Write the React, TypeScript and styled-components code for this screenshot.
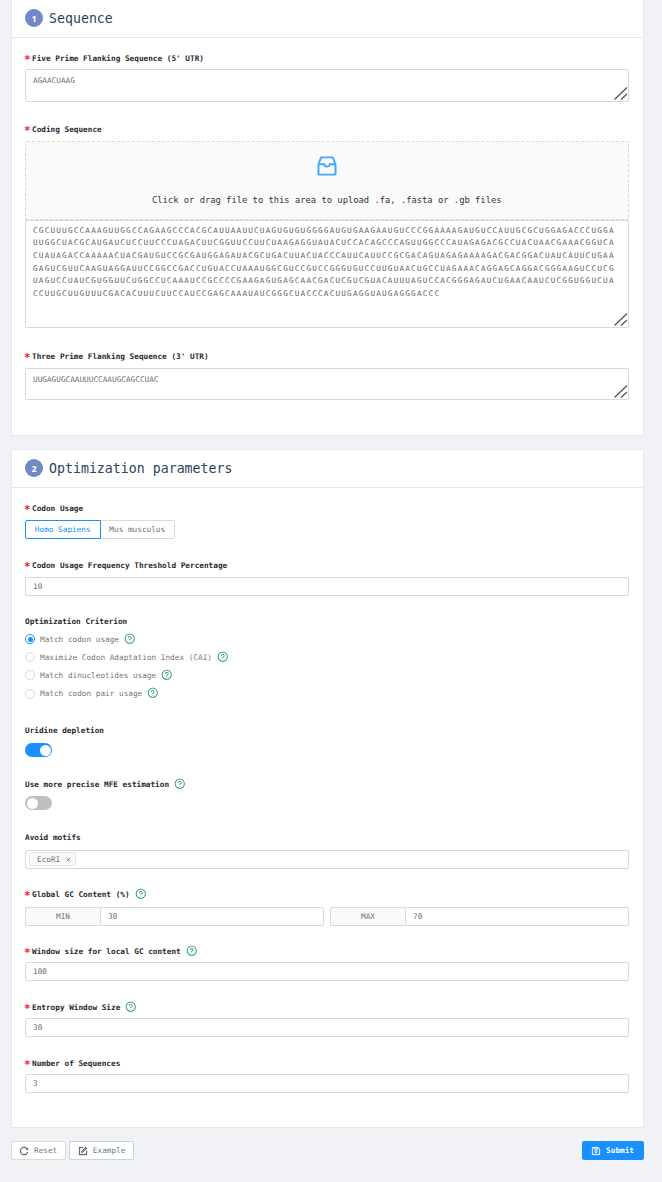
import React from 'react';
import styled, { createGlobalStyle } from 'styled-components';
import {
  AiOutlineClose,
  AiOutlineForm,
  AiOutlineInbox,
  AiOutlineQuestionCircle,
  AiOutlineReload,
  AiOutlineSave,
} from 'react-icons/ai';

const mono = '"DejaVu Sans Mono", monospace';

const GlobalStyle = createGlobalStyle`
  html, body {
    margin: 0;
    height: 1182px;
    overflow: hidden;
    background: #f0f2f5;
    font-family: ${mono};
  }
`;

const Page = styled.div`
  padding: 0 18.5px 0 10.5px;
  display: flex;
  flex-direction: column;
  gap: 13px;
`;

const Card = styled.section<{ $first?: boolean }>`
  background: #fff;
  border: 1px solid #e8e8e8;
  border-top: ${({ $first }) => ($first ? 'none' : '1px solid #e8e8e8')};
`;

const CardHead = styled.header<{ $first?: boolean }>`
  height: 37px;
  box-sizing: border-box;
  padding-bottom: ${({ $first }) => ($first ? '1px' : '0')};
  display: flex;
  align-items: center;
  gap: 6px;
  padding-left: 13.5px;
  box-shadow: 0 1px 0 #e8e8e8;
  margin-bottom: 1px;
`;

const Badge = styled.span`
  width: 18px;
  height: 18px;
  border-radius: 50%;
  background: #7189c8;
  color: #fff;
  font: 700 9px "Open Sans", sans-serif;
  display: flex;
  align-items: center;
  justify-content: center;
`;

const Title = styled.h2`
  margin: 0;
  font-size: 13.25px;
  font-weight: 400;
  color: #2c4356;
`;

const CardBody = styled.div<{ $pb: number }>`
  padding: ${({ $pb }) => `14.3px 14px ${$pb}px 13.5px`};
  display: flex;
  flex-direction: column;
`;

const Field = styled.div<{ $mb?: number }>`
  margin-bottom: ${({ $mb }) => $mb ?? 0}px;
`;

const Label = styled.div<{ $gap?: number }>`
  height: 12px;
  margin-bottom: ${({ $gap }) => $gap ?? 5}px;
  display: flex;
  align-items: center;
  font-size: 7.72px;
  font-weight: 700;
  color: #24292e;
  white-space: pre;
`;

const Star = styled.span`
  color: #f5222d;
  font-size: 11px;
  font-weight: 700;
  line-height: 12px;
  padding-top: 1.5px;
  height: 10.5px;
  width: 7px;
  flex: none;
  text-indent: -1px;
`;

const Help = styled(AiOutlineQuestionCircle)`
  color: #1f8f7d;
  font-size: 11.5px;
  margin-left: 5px;
  margin-bottom: 1px;
  flex: none;
`;

const AreaWrap = styled.div`
  position: relative;
  display: flex;
`;

const Area = styled.textarea<{ $h: number; $seq?: boolean }>`
  width: 100%;
  height: ${({ $h }) => $h}px;
  box-sizing: border-box;
  margin: 0;
  padding: ${({ $seq }) => ($seq ? '3.5px 7px' : '6px 7px')};
  border: 1px solid #d9d9d9;
  border-radius: 2px;
  background: #fff;
  color: ${({ $seq }) => ($seq ? '#5f5f5f' : '#6f6f6f')};
  font-family: ${mono};
  font-size: 7.72px;
  line-height: ${({ $seq }) => ($seq ? '12.67px' : '10px')};
  letter-spacing: ${({ $seq }) => ($seq ? '1.17px' : '0')};
  white-space: pre;
  overflow: hidden;
  resize: none;
  outline: none;
`;

const Grip = styled.svg`
  position: absolute;
  right: 1px;
  bottom: 1px;
  width: 14px;
  height: 14px;
`;

const Dragger = styled.div`
  height: 79px;
  box-sizing: border-box;
  border: 1px dashed #d9d9d9;
  border-radius: 2px 2px 0 0;
  background: #fafafa;
  display: flex;
  flex-direction: column;
  align-items: center;
`;

const InboxIcon = styled(AiOutlineInbox)`
  color: #40a9ff;
  font-size: 26px;
  margin-top: 11px;
`;

const DragText = styled.div`
  margin-top: 16px;
  font-size: 8.8px;
  color: #333;
`;

const Segments = styled.div`
  display: flex;
`;

const Segment = styled.div<{ $active?: boolean }>`
  width: 75.5px;
  height: 19px;
  box-sizing: border-box;
  margin-left: ${({ $active }) => ($active ? '0' : '-1px')};
  border: 1px solid ${({ $active }) => ($active ? '#1890ff' : '#d9d9d9')};
  border-radius: ${({ $active }) => ($active ? '2px 0 0 2px' : '0 2px 2px 0')};
  position: ${({ $active }) => ($active ? 'relative' : 'static')};
  background: #fff;
  color: ${({ $active }) => ($active ? '#1890ff' : '#6f6f6f')};
  font-size: 7.72px;
  display: flex;
  align-items: center;
  justify-content: center;
`;

const TextInput = styled.div`
  flex: 1;
  height: 19px;
  box-sizing: border-box;
  padding: 0 7px;
  border: 1px solid #d9d9d9;
  border-radius: 2px;
  background: #fff;
  color: #6f6f6f;
  font-size: 7.72px;
  display: flex;
  align-items: center;
`;

const RadioList = styled.div`
  margin-top: 6.7px;
  display: flex;
  flex-direction: column;
  gap: 8.1px;
`;

const RadioRow = styled.div`
  height: 10px;
  display: flex;
  align-items: center;
  font-size: 7.72px;
  color: #777;
`;

const RadioDot = styled.span<{ $on?: boolean }>`
  width: 10px;
  height: 10px;
  box-sizing: border-box;
  border-radius: 50%;
  border: 1px solid ${({ $on }) => ($on ? '#1890ff' : '#d9d9d9')};
  background: #fff;
  margin-right: 5px;
  flex: none;
  display: flex;
  align-items: center;
  justify-content: center;
  &::after {
    content: '';
    display: ${({ $on }) => ($on ? 'block' : 'none')};
    width: 5px;
    height: 5px;
    border-radius: 50%;
    background: #1890ff;
  }
`;

const Switch = styled.div<{ $on?: boolean }>`
  width: 27px;
  height: 14px;
  box-sizing: border-box;
  padding: 1.5px;
  border-radius: 7px;
  background: ${({ $on }) => ($on ? '#1890ff' : '#bfbfbf')};
  display: flex;
  justify-content: ${({ $on }) => ($on ? 'flex-end' : 'flex-start')};
  &::after {
    content: '';
    width: 11px;
    height: 11px;
    border-radius: 50%;
    background: #fff;
  }
`;

const TagInput = styled.div`
  height: 19.4px;
  box-sizing: border-box;
  padding: 2px 3px;
  border: 1px solid #d9d9d9;
  border-radius: 2px;
  background: #fff;
  display: flex;
  align-items: center;
`;

const Tag = styled.span`
  height: 13.5px;
  box-sizing: border-box;
  padding: 0 3px 0 7px;
  border: 1px solid #e8e8e8;
  border-radius: 2px;
  background: #fafafa;
  color: #6f6f6f;
  font-size: 7.72px;
  white-space: pre;
  display: flex;
  align-items: center;
  svg {
    font-size: 7px;
    color: #777;
  }
`;

const Pair = styled.div`
  display: flex;
  gap: 6.5px;
`;

const Group = styled.div`
  flex: 1;
  display: flex;
  height: 19px;
`;

const Addon = styled.div`
  width: 75px;
  box-sizing: border-box;
  border: 1px solid #d9d9d9;
  border-right: none;
  border-radius: 2px 0 0 2px;
  background: #fafafa;
  color: #6f6f6f;
  font-size: 7.72px;
  display: flex;
  align-items: center;
  justify-content: center;
`;

const Actions = styled.div`
  display: flex;
  align-items: center;
`;

const Button = styled.button<{ $primary?: boolean; $tint?: boolean }>`
  height: 18.5px;
  box-sizing: border-box;
  margin: 0;
  padding: 0 ${({ $primary }) => ($primary ? '8.5px' : '7.5px')};
  border: 1px solid ${({ $primary, $tint }) => ($primary ? '#1890ff' : $tint ? '#c5d5e3' : '#d9d9d9')};
  border-radius: 2px;
  background: ${({ $primary }) => ($primary ? '#1890ff' : '#fff')};
  color: ${({ $primary }) => ($primary ? '#fff' : '#6f7b85')};
  font-family: ${mono};
  font-size: 7.72px;
  font-weight: ${({ $primary }) => ($primary ? 700 : 400)};
  display: flex;
  align-items: center;
  gap: 5px;
  svg {
    font-size: 10px;
    color: ${({ $primary }) => ($primary ? '#fff' : '#444')};
    stroke: currentColor;
    stroke-width: 25;
  }
`;

const Spacer = styled.div`
  flex: 1;
`;

const ButtonGap = styled.div`
  width: 3.6px;
`;

const sequence = [
  'CGCUUUGCCAAAGUUGGCCAGAAGCCCACGCAUUAAUUCUAGUGUGUGGGGAUGUGAAGAAUGUCCCGGAAAAGAUGUCCAUUGCGCUGGAGACCCUGGA',
  'UUGGCUACGCAUGAUCUCCUUCCCUAGACUUCGGUUCCUUCUAAGAGGUAUACUCCACAGCCCAGUUGGCCCAUAGAGACGCCUACUAACGAAACGGUCA',
  'CUAUAGACCAAAAACUACGAUGUCCGCGAUGGAGAUACGCUGACUUACUACCCAUUCAUUCCGCGACAGUAGAGAAAAGACGACGGACUAUCAUUCUGAA',
  'GAGUCGUUCAAGUAGGAUUCCGGCCGACCUGUACCUAAAUGGCGUCCGUCCGGGUGUCCUUGUAACUGCCUAGAAACAGGAGCAGGACGGGAAGUCCUCG',
  'UAGUCCUAUCGUGGUUCUGGCCUCAAAUCCGCCCCGAAGAGUGAGCAACGACUCGUCGUACAUUUAGUCCACGGGAGAUCUGAACAAUCUCGGUGGUCUA',
  'CCUUGCUUGUUUCGACACUUUCUUCCAUCCGAGCAAAUAUCGGGCUACCCACUUGAGGUAUGAGGGACCC',
].join('\n');

const criteria = [
  'Match codon usage',
  'Maximize Codon Adaptation Index (CAI)',
  'Match dinucleotides usage',
  'Match codon pair usage',
];

const ResizeGrip = () => (
  <Grip viewBox="0 0 14 14">
    <path d="M0.5 12.5 L13 0.5 M7 12.5 L13 7" stroke="#555" strokeWidth="1.3" fill="none" />
  </Grip>
);

const SeqArea = ({ value, height, seq }: { value: string; height: number; seq?: boolean }) => (
  <AreaWrap>
    <Area readOnly defaultValue={value} $h={height} $seq={seq} />
    <ResizeGrip />
  </AreaWrap>
);

const App = () => (
  <>
    <GlobalStyle />
    <Page>
      <Card $first>
        <CardHead $first>
          <Badge>1</Badge>
          <Title>Sequence</Title>
        </CardHead>
        <CardBody $pb={34.7}>
          <Field $mb={21}>
            <Label><Star>*</Star>Five Prime Flanking Sequence (5' UTR)</Label>
            <SeqArea value="AGAACUAAG" height={33} />
          </Field>
          <Field $mb={22.5}>
            <Label $gap={6}><Star>*</Star>Coding Sequence</Label>
            <Dragger>
              <InboxIcon />
              <DragText>Click or drag file to this area to upload .fa, .fasta or .gb files</DragText>
            </Dragger>
            <SeqArea value={sequence} height={107.5} seq />
          </Field>
          <Field>
            <Label $gap={6}><Star>*</Star>Three Prime Flanking Sequence (3' UTR)</Label>
            <SeqArea value="UUGAGUGCAAUUUCCAAUGCAGCCUAC" height={32} />
          </Field>
        </CardBody>
      </Card>

      <Card>
        <CardHead>
          <Badge>2</Badge>
          <Title>Optimization parameters</Title>
        </CardHead>
        <CardBody $pb={34}>
          <Field $mb={20.3}>
            <Label $gap={6}><Star>*</Star>Codon Usage</Label>
            <Segments>
              <Segment $active>Homo Sapiens</Segment>
              <Segment>Mus musculus</Segment>
            </Segments>
          </Field>
          <Field $mb={20}>
            <Label><Star>*</Star>Codon Usage Frequency Threshold Percentage</Label>
            <TextInput>10</TextInput>
          </Field>
          <Field $mb={26}>
            <Label $gap={0}>Optimization Criterion</Label>
            <RadioList>
              {criteria.map((text, i) => (
                <RadioRow key={text}>
                  <RadioDot $on={i === 0} />
                  {text}
                  <Help />
                </RadioRow>
              ))}
            </RadioList>
          </Field>
          <Field $mb={21.3}>
            <Label $gap={6.7}>Uridine depletion</Label>
            <Switch $on />
          </Field>
          <Field $mb={21.3}>
            <Label $gap={5.7}>Use more precise MFE estimation<Help /></Label>
            <Switch />
          </Field>
          <Field $mb={19.6}>
            <Label $gap={6}>Avoid motifs</Label>
            <TagInput>
              <Tag>EcoRI <AiOutlineClose /></Tag>
            </TagInput>
          </Field>
          <Field $mb={19.6}>
            <Label $gap={6.4}><Star>*</Star>Global GC Content (%)<Help /></Label>
            <Pair>
              <Group><Addon>MIN</Addon><TextInput>30</TextInput></Group>
              <Group><Addon>MAX</Addon><TextInput>70</TextInput></Group>
            </Pair>
          </Field>
          <Field $mb={20}>
            <Label><Star>*</Star>Window size for local GC content<Help /></Label>
            <TextInput>100</TextInput>
          </Field>
          <Field $mb={20}>
            <Label><Star>*</Star>Entropy Window Size<Help /></Label>
            <TextInput>30</TextInput>
          </Field>
          <Field>
            <Label><Star>*</Star>Number of Sequences</Label>
            <TextInput>3</TextInput>
          </Field>
        </CardBody>
      </Card>

      <Actions>
        <Button><AiOutlineReload />Reset</Button>
        <ButtonGap />
        <Button $tint><AiOutlineForm />Example</Button>
        <Spacer />
        <Button $primary><AiOutlineSave />Submit</Button>
      </Actions>
    </Page>
  </>
);

export default App;
